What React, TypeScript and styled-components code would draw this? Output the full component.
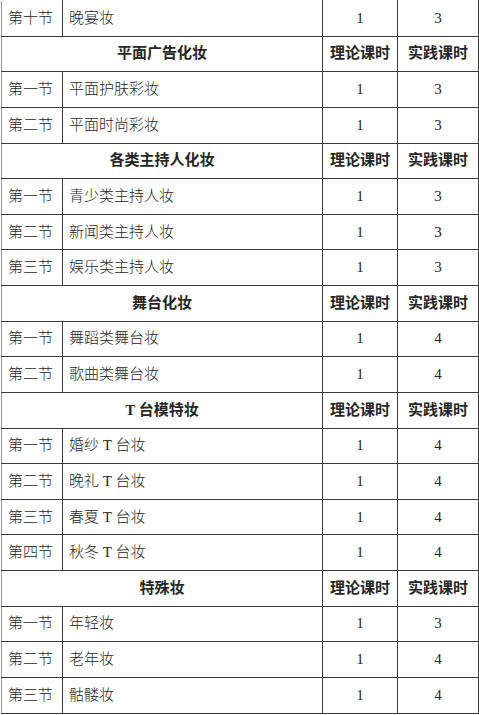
import React from "react";
import styled, { createGlobalStyle } from "styled-components";

const Global = createGlobalStyle`
  html, body { margin: 0; padding: 0; background: #fff; }
  body { font-family: "Liberation Serif", "Noto Sans CJK SC", serif; }
`;

const Page = styled.div`
  width: 479px;
  height: 715px;
  overflow: hidden;
  padding-left: 1px;
  box-sizing: border-box;
`;

const Table = styled.table`
  border-collapse: collapse;
  table-layout: fixed;
  width: 477px;
  color: #262626;
  font-size: 15px;
`;

const Col = styled.col<{ $w: number }>`
  width: ${(p) => p.$w}px;
`;

const Row = styled.tr`
  height: 35.63px;
  &:first-child > td {
    border-top-color: #fff;
  }
`;

const Cell = styled.td<{ $align?: "left" | "center"; $bold?: boolean; $edge?: boolean }>`
  border: 1px solid #3a3a3a;
  ${(p) => (p.$edge ? "border-left-color: #9a9a9a;" : "")}
  padding: 0 ${(p) => (p.$align === "left" ? "6px" : "0")};
  text-align: ${(p) => p.$align ?? "center"};
  vertical-align: middle;
  font-weight: ${(p) => (p.$bold ? 700 : 300)};
  font-family: "Liberation Serif", "Noto Sans CJK SC", serif;
  white-space: nowrap;
  line-height: 1;
  overflow: hidden;
`;

type Item =
  | { kind: "head"; title: string }
  | { kind: "row"; sec: string; name: string; t: string; p: string };

const items: Item[] = [
  { kind: "row", sec: "第十节", name: "晚宴妆", t: "1", p: "3" },
  { kind: "head", title: "平面广告化妆" },
  { kind: "row", sec: "第一节", name: "平面护肤彩妆", t: "1", p: "3" },
  { kind: "row", sec: "第二节", name: "平面时尚彩妆", t: "1", p: "3" },
  { kind: "head", title: "各类主持人化妆" },
  { kind: "row", sec: "第一节", name: "青少类主持人妆", t: "1", p: "3" },
  { kind: "row", sec: "第二节", name: "新闻类主持人妆", t: "1", p: "3" },
  { kind: "row", sec: "第三节", name: "娱乐类主持人妆", t: "1", p: "3" },
  { kind: "head", title: "舞台化妆" },
  { kind: "row", sec: "第一节", name: "舞蹈类舞台妆", t: "1", p: "4" },
  { kind: "row", sec: "第二节", name: "歌曲类舞台妆", t: "1", p: "4" },
  { kind: "head", title: "T 台模特妆" },
  { kind: "row", sec: "第一节", name: "婚纱 T 台妆", t: "1", p: "4" },
  { kind: "row", sec: "第二节", name: "晚礼 T 台妆", t: "1", p: "4" },
  { kind: "row", sec: "第三节", name: "春夏 T 台妆", t: "1", p: "4" },
  { kind: "row", sec: "第四节", name: "秋冬 T 台妆", t: "1", p: "4" },
  { kind: "head", title: "特殊妆" },
  { kind: "row", sec: "第一节", name: "年轻妆", t: "1", p: "3" },
  { kind: "row", sec: "第二节", name: "老年妆", t: "1", p: "4" },
  { kind: "row", sec: "第三节", name: "骷髅妆", t: "1", p: "4" },
];

export default function App() {
  return (
    <Page>
      <Global />
      <Table>
        <colgroup>
          <Col $w={61} />
          <Col $w={260} />
          <Col $w={75} />
          <Col $w={81} />
        </colgroup>
        <tbody>
          {items.map((it, i) =>
            it.kind === "head" ? (
              <Row key={i}>
                <Cell colSpan={2} $bold $edge>
                  {it.title}
                </Cell>
                <Cell $bold>理论课时</Cell>
                <Cell $bold>实践课时</Cell>
              </Row>
            ) : (
              <Row key={i}>
                <Cell $align="left" $edge>
                  {it.sec}
                </Cell>
                <Cell $align="left">{it.name}</Cell>
                <Cell>{it.t}</Cell>
                <Cell>{it.p}</Cell>
              </Row>
            )
          )}
        </tbody>
      </Table>
    </Page>
  );
}
